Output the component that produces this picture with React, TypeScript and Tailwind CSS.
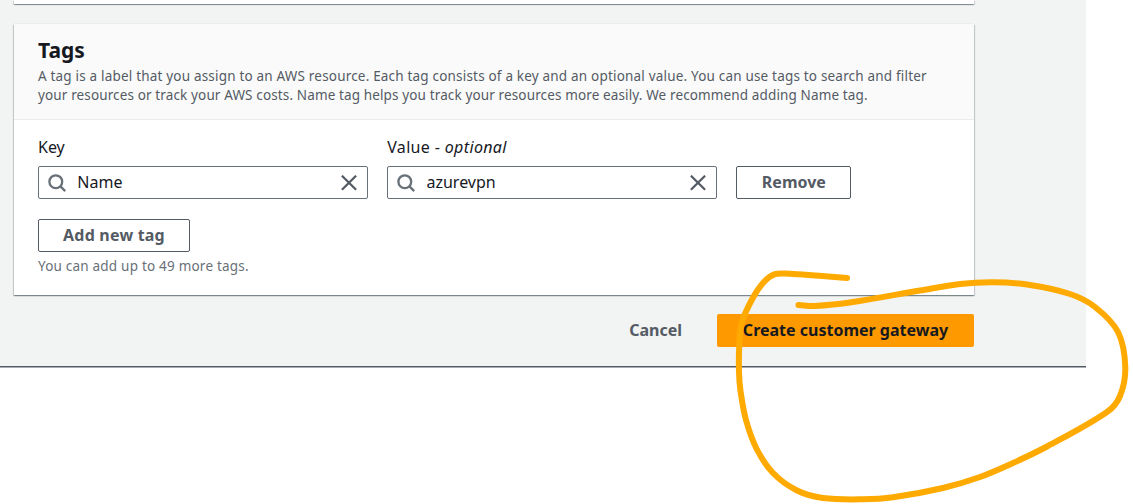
import type { ReactNode } from "react";

const shadow =
  "shadow-[0_1px_1px_0_rgba(0,28,36,0.3),1px_1px_1px_0_rgba(0,28,36,0.15),-1px_1px_1px_0_rgba(0,28,36,0.15)]";

type Point = [number, number];

const marker: Point[] = [
  [847, 278], [815, 275.5], [790, 273.8], [775, 274.2], [763, 283], [751.7, 300], [741.7, 323], [739.3, 345],
  [739, 372], [740.5, 391], [746, 420], [756.7, 449], [773, 473], [797, 490.5], [823, 498], [863, 499.3],
  [893, 497.3], [943, 488], [980, 477], [1013, 463], [1047, 446.5], [1107, 412], [1120, 396], [1125.3, 367],
  [1118, 332], [1095, 307], [1070, 294], [1027, 284.5], [993, 282.3], [960, 284], [920, 290.5], [853, 302],
  [815, 306], [798.5, 305],
];

function smoothPath(points: Point[]) {
  let d = `M${points[0][0]} ${points[0][1]}`;
  for (let i = 0; i < points.length - 1; i++) {
    const before = points[Math.max(i - 1, 0)];
    const from = points[i];
    const to = points[i + 1];
    const after = points[Math.min(i + 2, points.length - 1)];
    const length = Math.hypot(to[0] - from[0], to[1] - from[1]);
    const fromSpan = Math.hypot(to[0] - before[0], to[1] - before[1]);
    const toSpan = Math.hypot(after[0] - from[0], after[1] - from[1]);
    const a = length / 3 / fromSpan;
    const b = length / 3 / toSpan;
    d += `C${from[0] + (to[0] - before[0]) * a} ${from[1] + (to[1] - before[1]) * a} ${to[0] - (after[0] - from[0]) * b} ${to[1] - (after[1] - from[1]) * b} ${to[0]} ${to[1]}`;
  }
  return d;
}

function SearchIcon() {
  return (
    <svg width="18" height="18" viewBox="0 0 18 18" fill="none" stroke="#687078" strokeWidth="2.3" className="shrink-0">
      <circle cx="7.8" cy="7.7" r="6.4" />
      <path d="M12.2 12.1L17.2 17.1" />
    </svg>
  );
}

function ClearIcon() {
  return (
    <svg width="16" height="16" viewBox="0 0 16 16" fill="none" stroke="#545b64" strokeWidth="2.2" className="shrink-0">
      <path d="M0.9 0.7L15.1 14.7M15.1 0.7L0.9 14.7" />
    </svg>
  );
}

function Field({ label, value }: { label: ReactNode; value: string }) {
  return (
    <div className="w-[329.6px]">
      <div className="h-[22px] text-[16px] leading-[22px] text-[#16191f]">{label}</div>
      <div className="mt-[8px] flex h-[33px] items-center rounded-[2px] border border-[#687078] bg-white pl-[9.3px] pr-[10px]">
        <SearchIcon />
        <span className="ml-[11px] flex-1 pb-[2px] text-[16px] leading-[22px] text-[#16191f]">
          <span>{value}</span>
        </span>
        <ClearIcon />
      </div>
    </div>
  );
}

export default function App() {
  return (
    <div className="relative h-[504px] w-[1133px] overflow-hidden bg-white font-['Noto_Sans','Open_Sans',sans-serif]">
      <div className="flex h-[367px] w-[1086px] flex-col border-b border-[#545b64] bg-[#f2f3f3] pl-[14px] shadow-[0_1px_0_#a9adb2]">
        <div className={`h-[4px] w-[960px] shrink-0 bg-white ${shadow}`} />
        <section className={`mt-[20px] h-[271px] w-[960px] shrink-0 bg-white ${shadow}`}>
          <header className="h-[96px] border-b border-[#eaeded] bg-[#fafafa] px-[24px] pt-[12px] shadow-[0_-1px_0_#eaeded]">
            <h2 className="text-[21px] font-bold leading-[28px] text-[#16191f]">Tags</h2>
            <p className="whitespace-nowrap pt-[3px] text-[13.5px] leading-[19px] text-[#545b64]">
              <span className="tracking-[0.19px]">
                A tag is a label that you assign to an AWS resource. Each tag consists of a key and an optional value. You can use tags to search and filter
              </span>
              <br />
              <span className="tracking-[0.13px]">
                your resources or track your AWS costs. Name tag helps you track your resources more easily. We recommend adding Name tag.
              </span>
            </p>
          </header>
          <div className="px-[24px] pt-[16px]">
            <div className="flex items-end gap-[19.6px]">
              <Field label="Key" value="Name" />
              <Field
                label={
                  <span className="tracking-[0.35px]">
                    Value - <em>optional</em>
                  </span>
                }
                value="azurevpn"
              />
              <button className="h-[33px] w-[115px] rounded-[2px] border border-[#545b64] bg-white pb-[2px] text-[16px] font-bold leading-[22px] text-[#545b64]">
                Remove
              </button>
            </div>
            <button className="mt-[20px] block h-[33px] w-[152px] rounded-[2px] border border-[#545b64] bg-white pb-[2px] text-[16px] font-bold leading-[22px] tracking-[0.2px] text-[#545b64]">
              Add new tag
            </button>
            <p className="pt-[5px] text-[13.5px] leading-[19px] text-[#687078]">
              <span className="tracking-[0.21px]">You can add up to 49 more tags.</span>
            </p>
          </div>
        </section>
        <div className="mt-[19px] flex w-[960px] items-center justify-end">
          <button className="mr-[35px] pb-[2px] text-[16px] font-bold leading-[22px] text-[#545b64]">Cancel</button>
          <button className="h-[33px] w-[257px] rounded-[2px] bg-[#ff9900] pb-[2px] text-[16px] font-bold leading-[22px] text-[#16191f]">
            Create customer gateway
          </button>
        </div>
      </div>
      <svg
        className="pointer-events-none absolute left-0 top-0"
        width="1133"
        height="504"
        viewBox="0 0 1133 504"
        fill="none"
        stroke="#ffaa00"
        strokeWidth="6"
        strokeLinecap="round"
        strokeLinejoin="round"
      >
        <path d={smoothPath(marker)} />
      </svg>
    </div>
  );
}
